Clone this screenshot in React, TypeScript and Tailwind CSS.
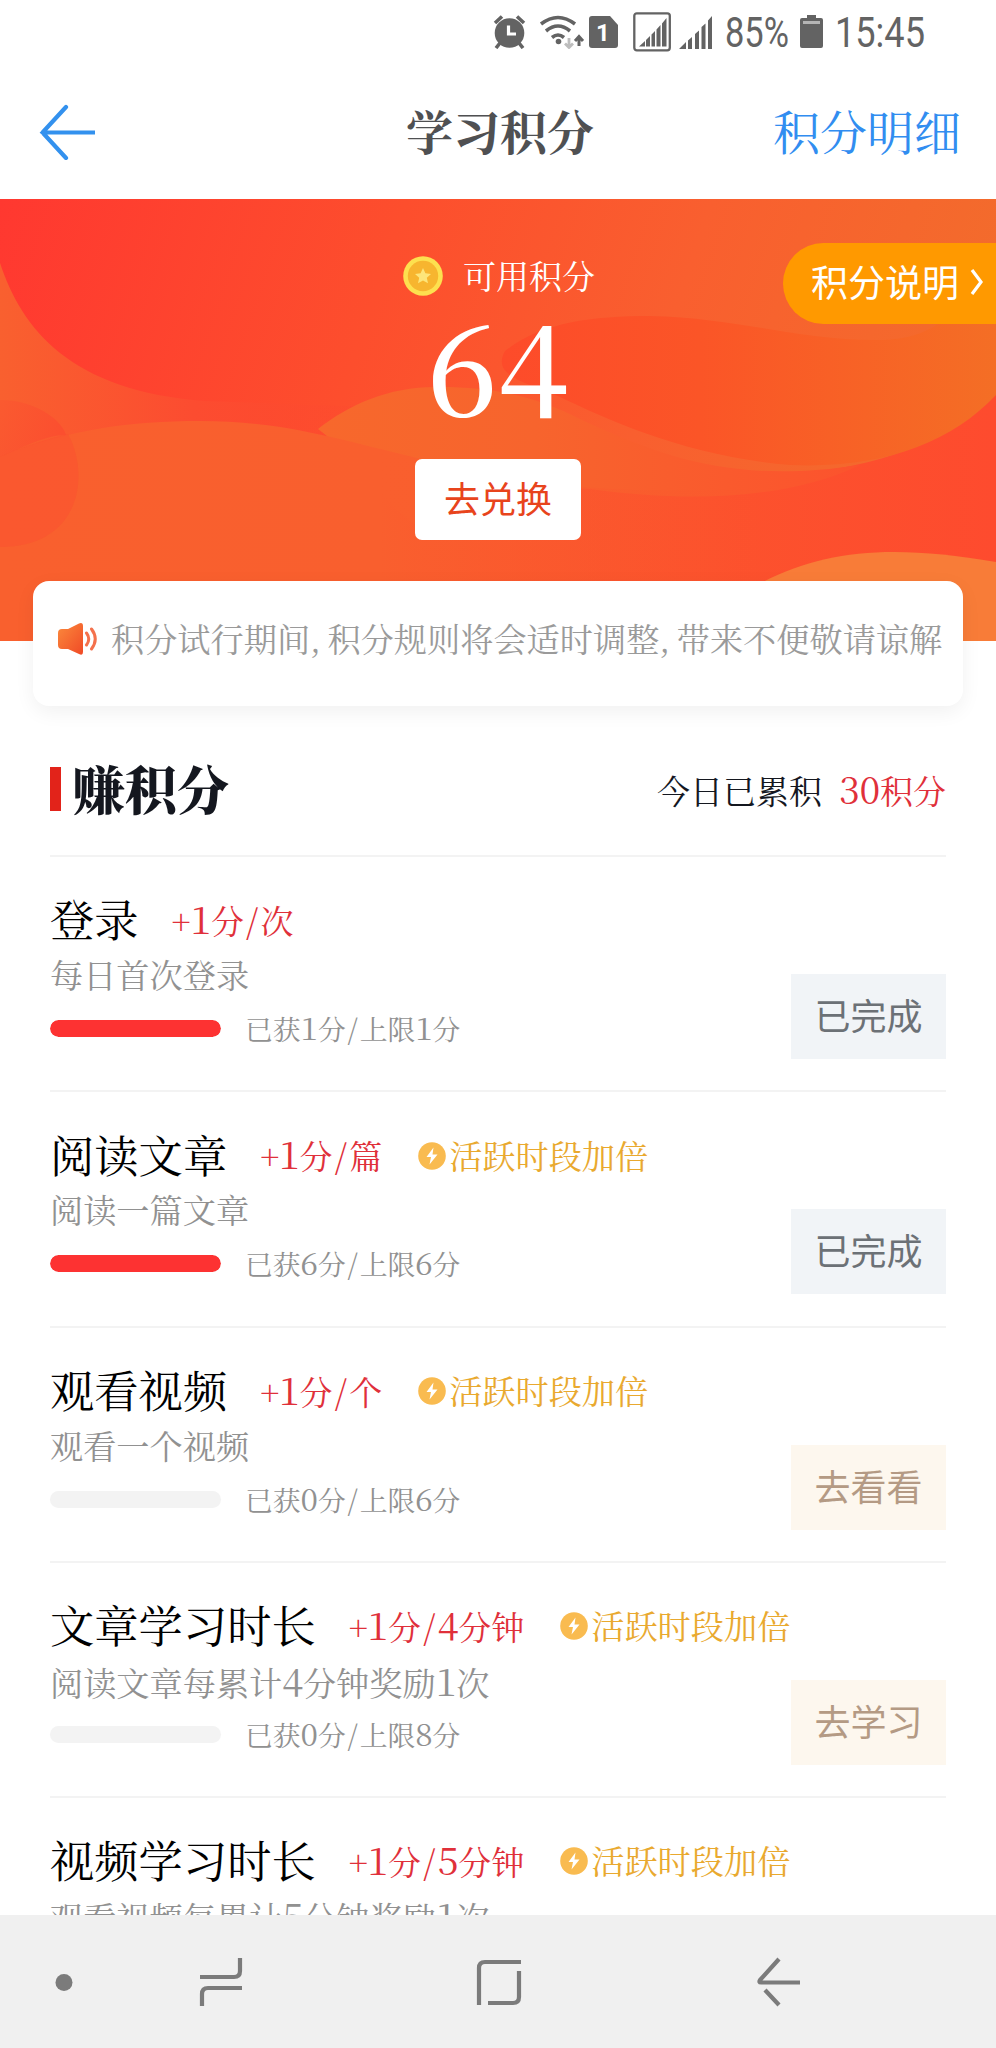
import React from 'react';

type Task = {
  title: string;
  reward: string;
  boosted: boolean;
  description: string;
  earned: number;
  limit: number;
  action: string;
};

const tasks: Task[] = [
  { title: '登录', reward: '+1分/次', boosted: false, description: '每日首次登录', earned: 1, limit: 1, action: '已完成' },
  { title: '阅读文章', reward: '+1分/篇', boosted: true, description: '阅读一篇文章', earned: 6, limit: 6, action: '已完成' },
  { title: '观看视频', reward: '+1分/个', boosted: true, description: '观看一个视频', earned: 0, limit: 6, action: '去看看' },
  { title: '文章学习时长', reward: '+1分/4分钟', boosted: true, description: '阅读文章每累计4分钟奖励1次', earned: 0, limit: 8, action: '去学习' },
  { title: '视频学习时长', reward: '+1分/5分钟', boosted: true, description: '观看视频每累计5分钟奖励1次', earned: 0, limit: 8, action: '去学习' },
];

// Digits are set a little larger than the Chinese characters around them, all of one width
function Mixed({ text }: { text: string }) {
  return (
    <>
      {text.split(/([\d+/])/).map((part, i) => {
        if (/^\d$/.test(part)) return <span key={i} className="inline-block w-[0.545em] text-center text-[1.14em]">{part}</span>;
        if (part === '/') return <span key={i} className="inline-block w-[0.48em] text-center text-[1.05em]">/</span>;
        if (part === '+') return <span key={i} className="inline-block w-[0.57em] text-center">+</span>;
        return part;
      })}
    </>
  );
}

function StatusBar() {
  return (
    <div className="h-[64px] flex items-center pl-[493px] font-[Roboto] text-[42px] leading-none text-[#636363]">
      <svg width="33" height="34" viewBox="0 0 33 34" fill="none" stroke="#636363">
        <circle cx="16.5" cy="18" r="14.8" fill="#636363" stroke="none" />
        <path d="M2 8 9 1.5M31 8 24 1.5" strokeWidth="3.6" />
        <path d="M7 28 3 33M26 28 30 33" strokeWidth="3.6" />
        <path d="M15.5 10.5V19H23" stroke="#fff" strokeWidth="3.2" />
      </svg>
      <svg className="ml-[13px]" width="46" height="34" viewBox="0 0 46 34" fill="none" stroke="#636363">
        <path d="M2 9Q19-4 36 9M7 16Q19 6 31 16M13 22.5Q19 17.5 25 22.5" strokeWidth="3.6" />
        <circle cx="19.5" cy="26.5" r="2.8" fill="#636363" stroke="none" />
        <path d="M30 23V32M26 28.5 30 32.5 34 28.5" stroke="#bdbdbd" strokeWidth="2.8" />
        <path d="M40 31V22M36 26 40 21.5 44 26" strokeWidth="3" />
      </svg>
      <svg className="ml-[4px]" width="30" height="33" viewBox="0 0 30 33">
        <path d="M3 0H21L29 9V29Q29 32 26 32H3Q0 32 0 29V3Q0 0 3 0Z" fill="#636363" />
        <text x="14" y="25" textAnchor="middle" fontSize="24" fontWeight="700" fill="#fff">1</text>
      </svg>
      <svg className="ml-[14px]" width="39" height="40" viewBox="0 0 39 40" fill="#636363">
        <rect x="1.3" y="1.3" width="35.5" height="37" rx="2.5" fill="none" stroke="#636363" strokeWidth="2.3" />
        <path d="M6 34.5 12 29V34.5ZM13 28 17 24V34.5H13ZM18.5 22.5 22 19V34.5H18.5ZM23.5 17.5 27.5 13V34.5H23.5ZM29 11.5 33.5 6V34.5H29Z" />
      </svg>
      <svg className="ml-[7px]" width="34" height="35" viewBox="0 0 34 35" fill="#636363">
        <path d="M0 34 7 27V34ZM9 25.5 13 22V34H9ZM16 19 20 15.5V34H16ZM22.5 12 26.5 8.5V34H22.5ZM29 5.5 33 1V34H29Z" />
      </svg>
      <span className="ml-[12px] w-[66px] pt-px whitespace-nowrap">
        <span className="inline-block origin-left scale-x-[0.82]">85%</span>
      </span>
      <svg className="ml-[9px]" width="24" height="34" viewBox="0 0 24 34">
        <path d="M7 0H16V3H21Q23 3 23 5V31Q23 33 21 33H2Q0 33 0 31V5Q0 3 2 3H7Z" fill="#636363" />
        <path d="M3 6H20V9H3Z" fill="#b5b5b5" />
      </svg>
      <span className="ml-[11px] w-[92px] pt-px whitespace-nowrap">
        <span className="inline-block origin-left scale-x-[0.86]">15:45</span>
      </span>
    </div>
  );
}

function NavBar() {
  return (
    <header className="h-[135px] grid grid-cols-[1fr_auto_1fr] items-center pl-[39px] pr-[35px] text-[47px] leading-none">
      <svg width="56" height="56" viewBox="0 0 56 56" fill="none" stroke="#3391ee" strokeWidth="4.2" strokeLinecap="round">
        <path d="M27 3 3.5 28.5 27 54M3.5 28.5H55" />
      </svg>
      <h1 className="pb-[5px] font-bold text-[#4f5052]">学习积分</h1>
      <a className="justify-self-end pb-[5px] font-normal text-[#318df0]">积分明细</a>
    </header>
  );
}

function BannerWaves() {
  return (
    <svg className="absolute inset-0" width="996" height="442" viewBox="0 0 996 442">
      <defs>
        <linearGradient id="base" x1="0" y1="0" x2="1" y2="0.15">
          <stop offset="0" stopColor="#ff3830" />
          <stop offset="0.4" stopColor="#fd4e2d" />
          <stop offset="0.7" stopColor="#f95f2f" />
          <stop offset="1" stopColor="#f36b2c" />
        </linearGradient>
        <linearGradient id="lower" x1="0" y1="0" x2="1" y2="0">
          <stop offset="0" stopColor="#fb582d" />
          <stop offset="0.5" stopColor="#fc522d" />
          <stop offset="1" stopColor="#fe4b2e" />
        </linearGradient>
        <linearGradient id="side" x1="0" y1="0" x2="1" y2="0">
          <stop offset="0" stopColor="#f9602f" />
          <stop offset="0.45" stopColor="#fc4c30" />
          <stop offset="1" stopColor="#fd492e" stopOpacity="0" />
        </linearGradient>
        <linearGradient id="wave" x1="0" y1="0" x2="1" y2="0">
          <stop offset="0" stopColor="#f9602e" />
          <stop offset="0.5" stopColor="#f95f2e" />
          <stop offset="1" stopColor="#fb562d" stopOpacity="0" />
        </linearGradient>
        <linearGradient id="hump" x1="0" y1="0" x2="1" y2="0">
          <stop offset="0" stopColor="#f7682c" />
          <stop offset="0.4" stopColor="#f7642d" />
          <stop offset="1" stopColor="#fc532d" />
        </linearGradient>
        <linearGradient id="leaf" x1="0" y1="0" x2="1" y2="0">
          <stop offset="0" stopColor="#fd4b2a" />
          <stop offset="0.4" stopColor="#fb5527" />
          <stop offset="1" stopColor="#f46e25" />
        </linearGradient>
        <linearGradient id="ball" x1="0" y1="0" x2="1" y2="0.3">
          <stop offset="0" stopColor="#fa5a30" />
          <stop offset="1" stopColor="#fb4f2f" />
        </linearGradient>
      </defs>
      <path fill="url(#base)" d="M0 0H996V442H0Z" />
      <path fill="url(#side)" d="M0 64C22 130 70 192 205 202L430 210V300H0Z" />
      <path fill="url(#lower)" d="M430 240C620 240 720 280 800 274C900 266 960 230 996 195V442H430Z" />
      <path fill="url(#hump)" d="M318 230C350 205 390 187 440 188C500 188 540 200 580 220C670 262 740 284 860 266C790 300 690 304 590 290C540 284 480 330 430 330C400 330 360 260 318 230Z" />
      <path fill="url(#wave)" d="M0 258C70 230 130 222 200 222C290 222 350 244 430 262C520 284 600 296 760 290V442H0Z" />
      <path fill="url(#leaf)" d="M505 152C540 124 590 117 650 117C740 119 800 142 880 141C920 140 945 130 996 70V196C950 245 880 270 790 266C690 258 610 222 560 198C530 184 490 178 505 152Z" />
      <path fill="url(#ball)" d="M0 201C40 201 64 225 66 236C45 236 20 250 0 258Z" />
      <path fill="#fb5030" opacity="0.5" d="M0 258C25 246 50 240 68 235C90 275 82 348 0 348Z" />
      <path fill="#f87c38" d="M750 390C820 350 890 345 996 363V442H750Z" />
    </svg>
  );
}

function CoinIcon() {
  return (
    <svg width="40" height="40" viewBox="0 0 40 40">
      <circle cx="20" cy="20" r="19.8" fill="#fde04f" />
      <circle cx="20" cy="20" r="15.2" fill="#f7b52f" />
      <path d="M20 12 22.4 17.3 28 17.9 23.8 21.7 25 27.3 20 24.5 15 27.3 16.2 21.7 12 17.9 17.6 17.3Z" fill="#fde57a" />
    </svg>
  );
}

function Banner() {
  return (
    <section className="relative h-[442px] overflow-hidden">
      <BannerWaves />
      <div className="relative flex flex-col items-center text-white">
        <div className="mt-[57px] flex h-[40px] items-center gap-[20px] pl-[2px] text-[33px] leading-none">
          <CoinIcon />
          <span className="pb-[3px]">可用积分</span>
        </div>
        <div className="h-[134px] text-[126px] leading-[132px] font-medium">64</div>
        <button className="mt-[29px] h-[81px] w-[166px] rounded-[7px] bg-white pb-[5px] font-['Noto_Sans_CJK_SC',sans-serif] text-[36px] leading-none text-[#e8441c]">
          去兑换
        </button>
      </div>
      <a className="absolute top-[44px] right-0 flex h-[81px] w-[213px] items-center rounded-l-full bg-[#ff9900] pb-[4px] pl-[28px] font-['Noto_Sans_CJK_SC',sans-serif] text-[37px] leading-none text-white">
        积分说明
        <svg className="ml-[11px]" width="14" height="26" viewBox="0 0 14 26" fill="none" stroke="#fff" strokeWidth="3.2">
          <path d="M2 1 11 13 2 25" />
        </svg>
      </a>
    </section>
  );
}

function Notice() {
  return (
    <div className="relative mx-[33px] -mt-[60px] flex h-[125px] items-center rounded-[16px] bg-white pb-[9px] pl-[25px] shadow-[0_6px_20px_rgba(0,0,0,0.06)]">
      <svg width="40" height="34" viewBox="0 0 40 34" fill="none">
        <defs>
          <linearGradient id="horn" x1="0" y1="0" x2="1" y2="1">
            <stop offset="0" stopColor="#fb8a3c" />
            <stop offset="1" stopColor="#f04a26" />
          </linearGradient>
        </defs>
        <path d="M4 7H10L21 1.5Q25 0 25 4V30Q25 34 21 32L10 27H4Q0 27 0 23V11Q0 7 4 7Z" fill="url(#horn)" />
        <path d="M28.5 11Q33 17 28.5 23M33.5 7Q41 17 33.5 27" stroke="#f4714c" strokeWidth="3" strokeLinecap="round" />
      </svg>
      <p className="ml-[13px] pb-[2px] text-[33.2px] leading-none whitespace-nowrap text-[#9a9a9a] [word-spacing:-2px]">
        积分试行期间, 积分规则将会适时调整, 带来不便敬请谅解
      </p>
    </div>
  );
}

function BoostBadge() {
  return (
    <span className="ml-[36px] flex items-center text-[33.2px] text-[#e9a92f]">
      <svg className="mt-[3px] mr-[3px]" width="28" height="28" viewBox="0 0 28 28">
        <circle cx="14" cy="14" r="13.8" fill="#f9bb50" />
        <path d="M15.5 5.5 8.5 15H13L11.5 22.5 19.5 12.5H14.5Z" fill="#fff" />
      </svg>
      活跃时段加倍
    </span>
  );
}

function TaskRow({ task }: { task: Task }) {
  const done = task.earned >= task.limit;
  return (
    <li className="h-[235.25px] border-t-2 border-[#f3f3f3] pt-[39px]">
      <div className="flex h-[46px] items-center leading-none whitespace-nowrap">
        <span className="pb-px text-[44.3px] text-black">{task.title}</span>
        <span className="ml-[33px] text-[33px] text-[#e0303a]"><Mixed text={task.reward} /></span>
        {task.boosted && <BoostBadge />}
      </div>
      <div className="flex justify-between">
        <div>
          <p className="mt-[12px] h-[40px] text-[33.2px] leading-[40px] text-[#919191]"><Mixed text={task.description} /></p>
          <div className="mt-[13px] flex h-[40px] items-center">
            <div className="mt-[3px] h-[17px] w-[171px] overflow-hidden rounded-full bg-[#f3f3f3]">
              <div className="h-full rounded-full bg-[#fd3232]" style={{ width: `${(task.earned / task.limit) * 100}%` }} />
            </div>
            <span className="ml-[24px] text-[27.8px] leading-none text-[#919191]">
              <Mixed text={`已获${task.earned}分/上限${task.limit}分`} />
            </span>
          </div>
        </div>
        <button
          className={`mt-[32px] h-[85px] w-[155px] pb-[5px] font-['Noto_Sans_CJK_SC',sans-serif] text-[36px] leading-none ${done ? 'bg-[#f1f4f7] text-[#6c7176]' : 'bg-[#fdf7ee] text-[#b49a84]'}`}
        >
          {task.action}
        </button>
      </div>
    </li>
  );
}

function SystemNav() {
  return (
    <nav className="h-[133px] shrink-0 bg-[#f0f0f0]">
      <svg width="996" height="133" viewBox="0 0 996 133" fill="none" stroke="#7b7b7b" strokeWidth="4.2">
        <circle cx="64" cy="67.5" r="8.5" fill="#7b7b7b" stroke="none" />
        <path d="M200 62H234Q240 62 240 56V43M202 91V79Q202 73 208 73H242" />
        <path d="M479 90V53Q479 47 485 47H521M519 56V82Q519 88 513 88H488" />
        <path d="M779 44 760 65Q758.5 67.5 761 67.5H800M765 75 779 90" />
      </svg>
    </nav>
  );
}

export default function App() {
  return (
    <div className="flex h-[2048px] w-[996px] flex-col overflow-hidden bg-white font-['Noto_Serif_CJK_SC','Noto_Sans_CJK_SC',serif]">
      <StatusBar />
      <NavBar />
      <main className="min-h-0 flex-1 overflow-hidden">
        <Banner />
        <Notice />
        <div className="px-[50px]">
          <div className="mt-[50px] flex h-[66px] items-center leading-none">
            <span className="h-[44px] w-[11px] bg-[#e2231a]" />
            <h2 className="ml-[12px] pb-[2px] text-[52px] font-black text-[#14171f]">赚积分</h2>
            <p className="ml-auto text-[33px] whitespace-nowrap text-[#14171f]">
              今日已累积
              <span className="ml-[17px] text-[#e0303a]"><Mixed text="30积分" /></span>
            </p>
          </div>
          <ul className="mt-[33px]">
            {tasks.map((task) => (
              <TaskRow key={task.title} task={task} />
            ))}
          </ul>
        </div>
      </main>
      <SystemNav />
    </div>
  );
}
